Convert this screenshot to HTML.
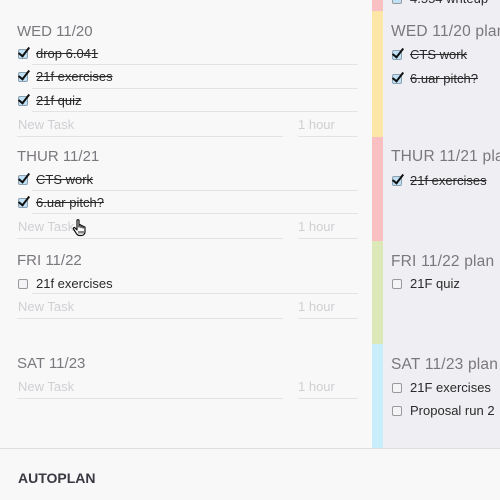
<!DOCTYPE html>
<html><head><style>
*{margin:0;padding:0;box-sizing:border-box}
body{width:500px;height:500px;overflow:hidden;background:#f8f8f9;font-family:"Liberation Sans",sans-serif;position:relative}
.a{position:absolute;white-space:nowrap}
.h{font-size:15px;color:#7a777d;font-weight:300}
.r{font-size:15.5px;letter-spacing:0.2px}
.t{font-size:13px;color:#2a2a2a}
.s{text-decoration:line-through}
.n{font-size:13px;color:#cfcfd2}
.l{position:absolute;height:1px;background:#e3e3e6}
.cb{position:absolute;width:10px;height:10px;border:1px solid #8aa0b0;background:#bfe0f5;border-radius:2px}
.cb:after{content:"";position:absolute;left:2px;top:-5px;width:4px;height:10px;border-right:2.5px solid #111;border-bottom:2.5px solid #111;transform:rotate(38deg)}
.ub{position:absolute;width:10px;height:10px;border:1px solid #9a9a9e;background:#f4f4f6;border-radius:2px}
</style></head><body>
<div class="a" style="left:383px;top:0;width:117px;height:448px;background:#efeef2"></div>
<div class="a" style="left:372px;top:0;width:11px;height:11px;background:#f8c0c2"></div>
<div class="a" style="left:372px;top:11px;width:11px;height:126px;background:#fde7a8"></div>
<div class="a" style="left:372px;top:137px;width:11px;height:104px;background:#f8c0c2"></div>
<div class="a" style="left:372px;top:241px;width:11px;height:103px;background:#dde8b8"></div>
<div class="a" style="left:372px;top:344px;width:11px;height:104px;background:#c9eefb"></div>
<div class="l" style="left:0;top:448px;width:500px;background:#dedee1"></div>

<div class="a h" style="left:17px;top:23px">WED 11/20</div>
<div class="cb" style="left:18px;top:49px"></div><div class="a t s" style="left:36px;top:46px">drop 6.041</div><div class="l" style="left:32px;top:64px;width:326px"></div>
<div class="cb" style="left:18px;top:72px"></div><div class="a t s" style="left:36px;top:69px">21f exercises</div><div class="l" style="left:32px;top:88px;width:326px"></div>
<div class="cb" style="left:18px;top:96px"></div><div class="a t s" style="left:36px;top:93px">21f quiz</div><div class="l" style="left:32px;top:111px;width:326px"></div>
<div class="a n" style="left:18px;top:117px">New Task</div><div class="a n" style="left:298px;top:117px">1 hour</div>
<div class="l" style="left:17px;top:136px;width:266px"></div><div class="l" style="left:298px;top:136px;width:60px"></div>

<div class="a h" style="left:17px;top:148px">THUR 11/21</div>
<div class="cb" style="left:18px;top:175px"></div><div class="a t s" style="left:36px;top:172px">CTS work</div><div class="l" style="left:32px;top:190px;width:326px"></div>
<div class="cb" style="left:18px;top:198px"></div><div class="a t s" style="left:36px;top:195px">6.uar pitch?</div><div class="l" style="left:32px;top:213px;width:326px"></div>
<div class="a n" style="left:18px;top:219px">New Task</div><div class="a n" style="left:298px;top:219px">1 hour</div>
<div class="l" style="left:17px;top:238px;width:266px"></div><div class="l" style="left:298px;top:238px;width:60px"></div>
<svg class="a" style="left:72px;top:219px" width="16" height="18" viewBox="0 0 16 18"><path d="M5 1.5c0-1 2-1 2 0V8V6.5c0-1 2-1 2 0V8.5V7.5c0-1 2-1 2 0V9V8.5c0-1 2-1 2 0V13c0 2-1.5 3.5-3.5 3.5H7.5C6 16.5 5 15.5 4 14L1.5 10c-.6-1 .8-2 1.6-1L5 11Z" fill="#fff" stroke="#111" stroke-width="1.2" stroke-linejoin="round"/><path d="M7 12v2.5M9 12v2.5M11 12v2.5" stroke="#111" stroke-width="1"/></svg>

<div class="a h" style="left:17px;top:252px">FRI 11/22</div>
<div class="ub" style="left:18px;top:279px"></div><div class="a t" style="left:36px;top:276px">21f exercises</div><div class="l" style="left:32px;top:293px;width:326px"></div>
<div class="a n" style="left:18px;top:299px">New Task</div><div class="a n" style="left:298px;top:299px">1 hour</div>
<div class="l" style="left:17px;top:318px;width:266px"></div><div class="l" style="left:298px;top:318px;width:60px"></div>

<div class="a h" style="left:17px;top:355px">SAT 11/23</div>
<div class="a n" style="left:18px;top:379px">New Task</div><div class="a n" style="left:298px;top:379px">1 hour</div>
<div class="l" style="left:17px;top:398px;width:266px"></div><div class="l" style="left:298px;top:398px;width:60px"></div>

<div class="a" style="left:18px;top:470px;font-size:14px;font-weight:bold;color:#3a3840">AUTOPLAN</div>

<div class="ub" style="left:392px;top:-6px;background:#bfe0f5"></div><div class="a t" style="left:410px;top:-9px">4.554 writeup</div>
<div class="a h r" style="left:391px;top:23px">WED 11/20 plan</div>
<div class="cb" style="left:392px;top:50px"></div><div class="a t s" style="left:410px;top:47px">CTS work</div>
<div class="cb" style="left:392px;top:74px"></div><div class="a t s" style="left:410px;top:71px">6.uar pitch?</div>
<div class="a h r" style="left:391px;top:148px">THUR 11/21 plan</div>
<div class="cb" style="left:392px;top:176px"></div><div class="a t s" style="left:410px;top:173px">21f exercises</div>
<div class="a h r" style="left:391px;top:253px">FRI 11/22 plan</div>
<div class="ub" style="left:392px;top:279px"></div><div class="a t" style="left:410px;top:276px">21F quiz</div>
<div class="a h r" style="left:391px;top:356px">SAT 11/23 plan</div>
<div class="ub" style="left:392px;top:383px"></div><div class="a t" style="left:410px;top:380px">21F exercises</div>
<div class="ub" style="left:392px;top:406px"></div><div class="a t" style="left:410px;top:403px">Proposal run 2</div>
</body></html>
